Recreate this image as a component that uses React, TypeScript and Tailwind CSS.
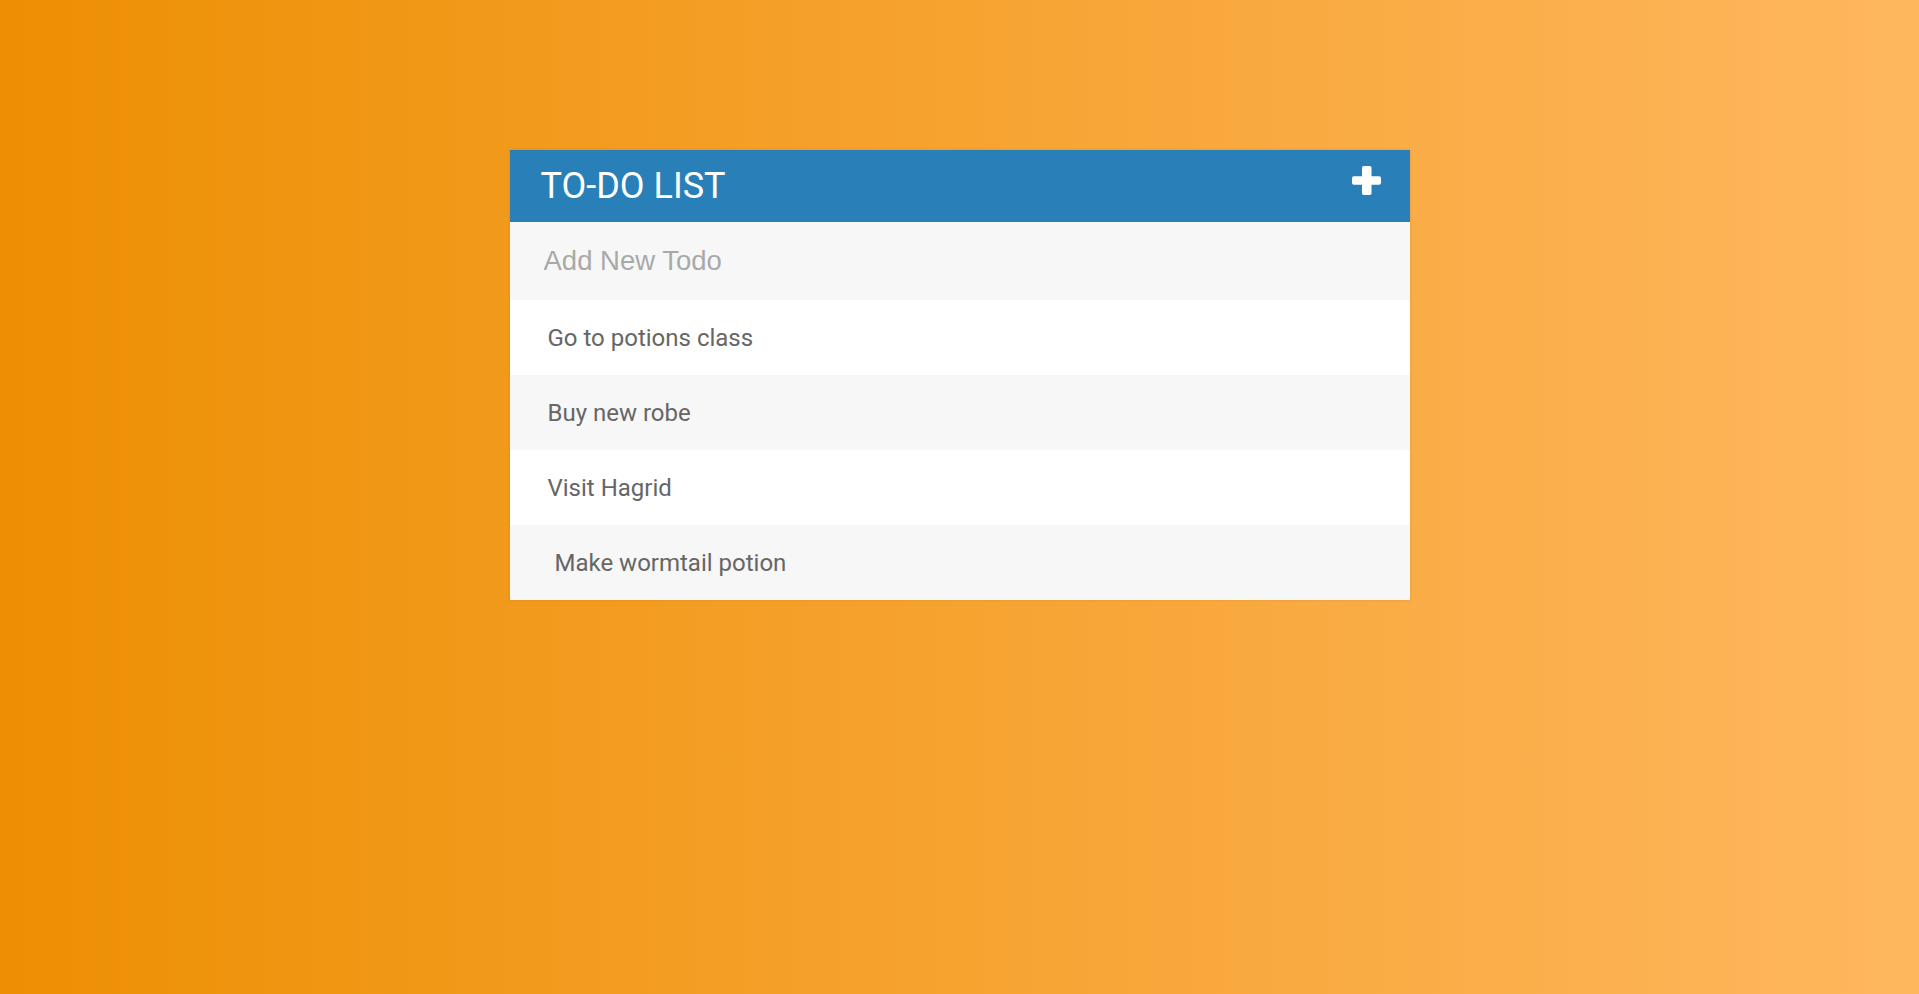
const todos = [
  { text: "Go to potions class", indent: false },
  { text: "Buy new robe", indent: false },
  { text: "Visit Hagrid", indent: false },
  { text: "Make wormtail potion", indent: true },
];

function PlusIcon() {
  return (
    <svg width="29" height="29" viewBox="0 0 29 29" aria-hidden="true">
      <rect x="10" y="0" width="9.5" height="29" rx="1.8" fill="#fff" />
      <rect x="0" y="10.2" width="29" height="8.6" rx="1.8" fill="#fff" />
    </svg>
  );
}

export default function App() {
  return (
    <div className="min-h-[994px] w-full bg-linear-to-r/srgb from-[#ED8F03] to-[#FFB75E] pt-[150px]">
      <div className="mx-auto w-[900px] bg-[#f7f7f7] shadow-[0_0_3px_rgba(0,0,0,0.1)]">
        <div className="flex h-[72px] items-center justify-between bg-[#2980b9] pl-[31px] pr-[29px] text-white">
          <h1 className="font-['Roboto',sans-serif] text-[36px] leading-none font-normal">
            TO-DO LIST
          </h1>
          <button type="button" aria-label="Add todo" className="-mt-[11px]">
            <PlusIcon />
          </button>
        </div>

        <input
          type="text"
          placeholder="Add New Todo"
          className="block h-[78px] w-full bg-[#f7f7f7] px-[34px] font-['Liberation_Sans',Arial,sans-serif] text-[27.5px] text-[#666] outline-none placeholder:text-[#a9a9a9]"
        />

        <ul className="font-['Roboto',sans-serif] text-[24px] text-[#666]">
          {todos.map((todo, i) => (
            <li
              key={todo.text}
              className={`flex h-[75px] items-center ${
                i % 2 === 0 ? "bg-white" : "bg-[#f7f7f7]"
              } ${todo.indent ? "pl-[45px]" : "pl-[38px]"}`}
            >
              {todo.text}
            </li>
          ))}
        </ul>
      </div>
    </div>
  );
}
